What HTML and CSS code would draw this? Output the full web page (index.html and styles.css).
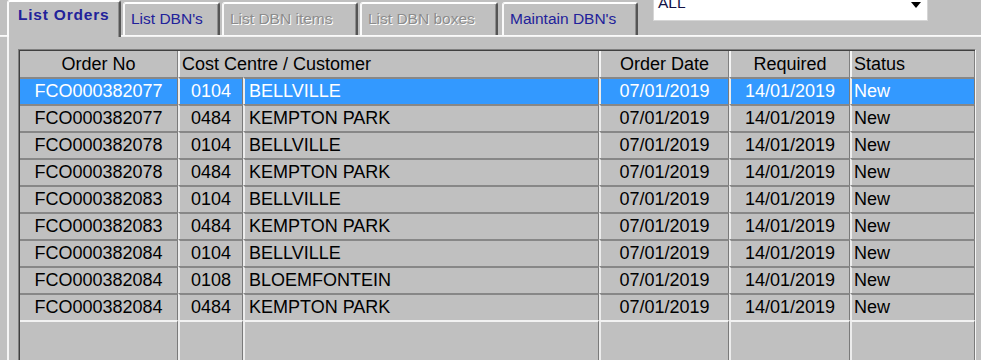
FILE: index.html
```html
<!DOCTYPE html>
<html lang="en">
<head>
    <meta charset="UTF-8">
    <title>List Orders</title>
    <link rel="stylesheet" href="styles.css">
</head>
<body>
    <!-- Tabs + filter -->
    <div class="tab-row">
        <div class="tab active" style="width:114px">List Orders</div>
        <div class="tab" style="width:97px">List DBN's</div>
        <div class="tab disabled" style="width:136px">List DBN items</div>
        <div class="tab disabled" style="width:138px">List DBN boxes</div>
        <div class="tab gap" style="width:136px">Maintain DBN's</div>
        <div class="combo">
            <span>ALL</span>
            <svg width="10" height="6" viewBox="0 0 10 6"><polygon points="0,0 10,0 5,6" fill="#000"/></svg>
        </div>
    </div>

    <div class="panel">
        <div class="table-pane">
            <div class="grid-row head-row">
                <div class="head-cell">Order No</div>
                <div class="head-cell left">Cost Centre / Customer</div>
                <div class="head-cell">Order Date</div>
                <div class="head-cell">Required</div>
                <div class="head-cell left">Status</div>
            </div>

            <div class="grid-row selected">
                <div class="cell">FCO000382077</div><div class="cell">0104</div><div class="cell left">BELLVILLE</div>
                <div class="cell">07/01/2019</div><div class="cell">14/01/2019</div><div class="cell status">New</div>
            </div>
            <div class="grid-row">
                <div class="cell">FCO000382077</div><div class="cell">0484</div><div class="cell left">KEMPTON PARK</div>
                <div class="cell">07/01/2019</div><div class="cell">14/01/2019</div><div class="cell status">New</div>
            </div>
            <div class="grid-row">
                <div class="cell">FCO000382078</div><div class="cell">0104</div><div class="cell left">BELLVILLE</div>
                <div class="cell">07/01/2019</div><div class="cell">14/01/2019</div><div class="cell status">New</div>
            </div>
            <div class="grid-row">
                <div class="cell">FCO000382078</div><div class="cell">0484</div><div class="cell left">KEMPTON PARK</div>
                <div class="cell">07/01/2019</div><div class="cell">14/01/2019</div><div class="cell status">New</div>
            </div>
            <div class="grid-row">
                <div class="cell">FCO000382083</div><div class="cell">0104</div><div class="cell left">BELLVILLE</div>
                <div class="cell">07/01/2019</div><div class="cell">14/01/2019</div><div class="cell status">New</div>
            </div>
            <div class="grid-row">
                <div class="cell">FCO000382083</div><div class="cell">0484</div><div class="cell left">KEMPTON PARK</div>
                <div class="cell">07/01/2019</div><div class="cell">14/01/2019</div><div class="cell status">New</div>
            </div>
            <div class="grid-row">
                <div class="cell">FCO000382084</div><div class="cell">0104</div><div class="cell left">BELLVILLE</div>
                <div class="cell">07/01/2019</div><div class="cell">14/01/2019</div><div class="cell status">New</div>
            </div>
            <div class="grid-row">
                <div class="cell">FCO000382084</div><div class="cell">0108</div><div class="cell left">BLOEMFONTEIN</div>
                <div class="cell">07/01/2019</div><div class="cell">14/01/2019</div><div class="cell status">New</div>
            </div>
            <div class="grid-row">
                <div class="cell">FCO000382084</div><div class="cell">0484</div><div class="cell left">KEMPTON PARK</div>
                <div class="cell">07/01/2019</div><div class="cell">14/01/2019</div><div class="cell status">New</div>
            </div>

            <!-- empty space under the last row keeps the column lines -->
            <div class="grid-row filler">
                <div class="cell"></div><div class="cell"></div><div class="cell"></div>
                <div class="cell"></div><div class="cell"></div><div class="cell"></div>
            </div>
        </div>
    </div>
</body>
</html>
```

FILE: styles.css
```css
* {
    box-sizing: border-box;
}

body {
    margin: 0;
    width: 981px;
    height: 360px;
    overflow: hidden;
    background: #c0c0c0;
    font-family: "Liberation Sans", Arial, sans-serif;
    color: #000;
}

/* Tabs */
.tab-row {
    display: flex;
    align-items: flex-end;
    height: 37px;
    padding-left: 7px;
    background: linear-gradient(#fff, #ececec) left bottom / 100% 2px no-repeat;
}

.tab {
    height: 33px;
    margin-bottom: 2px;
    margin-left: 2px;
    padding-left: 6px;
    border: 2px solid;
    border-bottom: 0;
    border-color: #fff #555 transparent #fafafa;
    border-radius: 3px 3px 0 0;
    box-shadow: inset -1px 0 0 #8e8e8e;
    background: #c0c0c0;
    font-size: 15.5px;
    line-height: 29px;
    color: #22229a;
    white-space: nowrap;
}

.tab.active {
    height: 37px;
    margin: 0;
    padding-left: 9px;
    font-weight: bold;
    letter-spacing: 0.8px;
    line-height: 26px;
}

.tab.disabled {
    color: #8c8c8c;
    text-shadow: 1px 1px 0 #fff;
}

.tab.gap {
    margin-left: 4px;
}

.combo {
    align-self: flex-start;
    display: flex;
    width: 275px;
    height: 29px;
    margin: -8px 0 0 15px;
    padding: 0 6px 0 4px;
    background: #fff;
    border: 1px solid #d6d6d6;
    font-size: 15.5px;
    line-height: 19px;
    color: #111144;
}

.combo svg {
    margin: 9px 0 0 auto;
}

/* Table */
.panel {
    margin-left: 7px;
    height: 323px;
    padding: 12px 0 0 9px;
    border-left: 2px solid #f4f4f4;
}

.table-pane {
    width: 958px;
    height: 311px;
    overflow: hidden;
    padding: 1px 0 0 1px;
    border: 1px solid;
    border-bottom: 0;
    border-color: #808080 #f4f4f4 #f4f4f4 #808080;
    box-shadow: inset 1px 1px 0 #404040;
}

.grid-row {
    display: grid;
    grid-template-columns: 158px 65px 356px 130px 121px 125px;
}

.head-row {
    grid-template-columns: 158px 421px 130px 121px 125px;
    height: 26px;
}

.head-cell {
    border-left: 2px solid #f4f4f4;
    border-right: 1px solid #808080;
    font-size: 18px;
    line-height: 26px;
    text-align: center;
    white-space: nowrap;
}

.head-cell:first-child {
    border-left: 0;
}

.head-cell.left {
    text-align: left;
    padding-left: 2px;
}

.cell {
    height: 27px;
    border-top: 2px solid #878787;
    border-left: 2px solid #ececec;
    border-right: 1px solid #7a7a7a;
    font-size: 18px;
    line-height: 25px;
    text-align: center;
    white-space: nowrap;
    overflow: hidden;
}

.cell:first-child {
    border-left: 0;
}

.cell.left {
    text-align: left;
    padding-left: 4px;
}

.cell.status {
    text-align: left;
    padding-left: 2px;
}

.selected .cell {
    background: #3399ff;
    color: #fff;
}

.filler .cell {
    height: 60px;
    border-top: 2px solid #f2f2f2;
}
```
